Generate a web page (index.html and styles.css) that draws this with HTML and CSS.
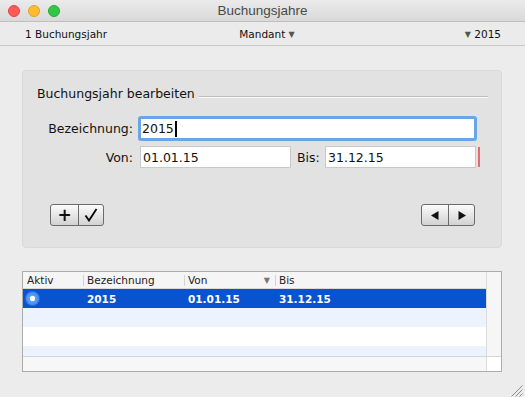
FILE: index.html
```html
<!DOCTYPE html>
<html lang="de">
<head>
<meta charset="utf-8">
<title>Buchungsjahre</title>
<link rel="stylesheet" href="styles.css">
</head>
<body>
<div class="window">
  <div class="titlebar">
    <div class="lights">
      <span class="light red"></span>
      <span class="light yellow"></span>
      <span class="light green"></span>
    </div>
    <div class="title">Buchungsjahre</div>
    <div></div>
  </div>
  <div class="toolbar">
    <span class="tb-left">1 Buchungsjahr</span>
    <span class="tb-center">Mandant <span class="tri">&#9660;</span></span>
    <span class="tb-right"><span class="tri">&#9660;</span> 2015</span>
  </div>

  <section class="group">
    <div class="legend"><span class="legend-text">Buchungsjahr bearbeiten</span><span class="rule"></span></div>
    <div class="row row1">
      <label class="lbl">Bezeichnung:</label>
      <div class="field focus">2015<span class="caret"></span></div>
    </div>
    <div class="row row2">
      <label class="lbl">Von:</label>
      <div class="field date">01.01.15</div>
      <label class="lbl-bis">Bis:</label>
      <div class="field date">31.12.15</div>
      <span class="err"></span>
    </div>
    <div class="buttons">
      <div class="seg">
        <span class="segbtn plus">+</span>
        <span class="segbtn check"><svg width="14" height="14" viewBox="0 0 14 14"><path d="M1.5 7.5 L5 12.5 L12.5 1" fill="none" stroke="#000" stroke-width="1.8" stroke-linejoin="miter"/></svg></span>
      </div>
      <div class="seg">
        <span class="segbtn arrow"><svg width="8" height="9" viewBox="0 0 8 9"><path d="M7.5 0 L7.5 9 L0 4.5 Z" fill="#111"/></svg></span>
        <span class="segbtn arrow"><svg width="8" height="9" viewBox="0 0 8 9"><path d="M0.5 0 L0.5 9 L8 4.5 Z" fill="#111"/></svg></span>
      </div>
    </div>
  </section>

  <div class="table">
    <div class="tbody">
      <div class="trow head">
        <span class="cell c1">Aktiv</span>
        <span class="cell c2 sep">Bezeichnung</span>
        <span class="cell c3 sep">Von<span class="sort">&#9660;</span></span>
        <span class="cell c4 sep">Bis</span>
      </div>
      <div class="trow sel">
        <span class="cell c1"><span class="radio"></span></span>
        <span class="cell c2">2015</span>
        <span class="cell c3">01.01.15</span>
        <span class="cell c4">31.12.15</span>
      </div>
      <div class="trow alt"></div>
      <div class="trow"></div>
      <div class="trow alt short"></div>
    </div>
    <div class="vscroll"></div>
    <div class="hscroll"></div>
    <div class="corner"></div>
  </div>

  <div class="grip"><svg width="13" height="13" viewBox="0 0 13 13"><path d="M12.5 1.5 L1.5 12.5 M12.5 5.5 L5.5 12.5 M12.5 9.5 L9.5 12.5" stroke="#8a8a8a" stroke-width="1"/></svg></div>
</div>
</body>
</html>
```

FILE: styles.css
```css
* { box-sizing: border-box; }
html, body { margin: 0; padding: 0; }
body {
  width: 525px;
  height: 397px;
  background: #ececec;
  font-family: "DejaVu Sans", Verdana, sans-serif;
  color: #111;
  overflow: hidden;
}
.window {
  width: 525px;
  height: 397px;
  display: flex;
  flex-direction: column;
  background: #ececec;
}
.titlebar {
  height: 22px;
  display: grid;
  grid-template-columns: 1fr auto 1fr;
  align-items: center;
  background: linear-gradient(#ebebeb, #d9d9d9);
  border-bottom: 1px solid #bfbfbf;
}
.lights { display: flex; gap: 8px; padding-left: 8px; }
.light { width: 12px; height: 12px; border-radius: 50%; }
.red { background: #fc5b57; border: 1px solid #e2463f; }
.yellow { background: #fdbc2e; border: 1px solid #e0a029; }
.green { background: #33c748; border: 1px solid #27aa35; }
.title {
  font-family: "Liberation Sans", Arial, sans-serif;
  font-size: 13.5px;
  color: #4a4a4a;
}
.toolbar {
  height: 24px;
  display: grid;
  grid-template-columns: 1fr auto 1fr;
  align-items: center;
  padding: 0 24px 0 25px;
  border-bottom: 1px solid #c9c9c9;
  font-size: 10.5px;
  color: #111;
  background: #ebebeb;
}
.tb-center { padding-left: 8px; }
.tb-right { justify-self: end; }
.tri { font-size: 8px; color: #555; vertical-align: 1px; }

.group {
  margin: 24px 23px 0 22px;
  height: 178px;
  background: #e2e2e2;
  border: 1px solid #d9d9d9;
  border-radius: 4px;
  padding: 15px 13px 0 0;
  display: flex;
  flex-direction: column;
}
.legend { display: flex; align-items: flex-start; margin-left: 14px; height: 16px; }
.legend-text { font-size: 12.5px; line-height: 16px; white-space: nowrap; }
.rule { flex: 1; margin: 10px 0 0 4px; border-top: 1px solid #bdbdbd; border-bottom: 1px solid #fafafa; }

.row { display: flex; align-items: center; }
.lbl { width: 110px; text-align: right; font-size: 12.5px; }
.row1 { margin-top: 14px; height: 25px; }
.row1 .field { margin-left: 5px; width: 339px; }
.field {
  background: #fff;
  font-size: 12.5px;
  display: flex;
  align-items: center;
}
.focus {
  height: 25px;
  border: 3px solid #6aa4ea;
  border-radius: 3px;
  padding-left: 1px;
}
.caret { width: 2px; height: 16px; background: #000; margin-left: 1px; }
.row2 { margin-top: 5px; height: 22px; }
.date {
  height: 22px;
  width: 151px;
  border: 1px solid #c9c9c9;
  padding-left: 2px;
}
.row2 .lbl + .date { margin-left: 7px; }
.lbl-bis { font-size: 12.5px; margin-left: 6px; width: 28px; }
.err { width: 2px; height: 20px; background: #e86b6b; margin-left: 2px; }

.buttons {
  margin: 36px 13px 0 27px;
  display: flex;
  justify-content: space-between;
}
.seg {
  display: flex;
  height: 22px;
  border: 1px solid #6b6b6b;
  border-radius: 3px;
  background: linear-gradient(#fbfbfb, #d2d2d2);
  overflow: hidden;
}
.segbtn { display: flex; align-items: center; justify-content: center; height: 20px; }
.segbtn + .segbtn { border-left: 1px solid #6b6b6b; }
.plus { width: 27px; font-size: 17px; font-weight: bold; line-height: 20px; }
.check { width: 25px; }
.arrow { width: 26px; }

.table {
  margin: 23px 23px 0 22px;
  height: 101px;
  border: 1px solid #acacac;
  display: grid;
  grid-template-columns: 1fr 15px;
  grid-template-rows: 1fr 15px;
  background: #fff;
}
.tbody { overflow: hidden; }
.vscroll { background: #f6f6f6; border-left: 1px solid #dcdcdc; }
.hscroll { background: #f7f7f7; border-top: 1px solid #d6d6d6; }
.corner { background: #fff; border-top: 1px solid #d6d6d6; border-left: 1px solid #dcdcdc; }
.trow { display: flex; height: 19px; align-items: center; font-size: 10.5px; }
.trow.head { height: 17px; background: #f5f5f5; border-bottom: 1px solid #d8d8d8; color: #222; }
.trow.alt { background: #edf3fe; }
.trow.short { height: 11px; }
.trow.sel { background: #0a53cf; color: #fff; font-weight: bold; }
.cell { height: 100%; display: flex; align-items: center; position: relative; padding-left: 4px; white-space: nowrap; }
.c1 { width: 60px; }
.c2 { width: 101px; }
.c3 { width: 91px; }
.c4 { flex: 1; }
.sep::before {
  content: "";
  position: absolute;
  left: 0; top: 3px; bottom: 2px;
  border-left: 1px solid #d2d2d2;
}
.sort { position: absolute; right: 5px; font-size: 8px; color: #777; }
.radio {
  width: 15px; height: 15px; border-radius: 50%;
  background: radial-gradient(circle, #fff 0 2.5px, #5aa0f6 3px, #3f86ef 7.5px);
  border: 1px solid #2f6fd6;
  margin-left: -2px;
}
.grip { align-self: flex-end; margin: auto 2px 2px 0; height: 13px; }
```
